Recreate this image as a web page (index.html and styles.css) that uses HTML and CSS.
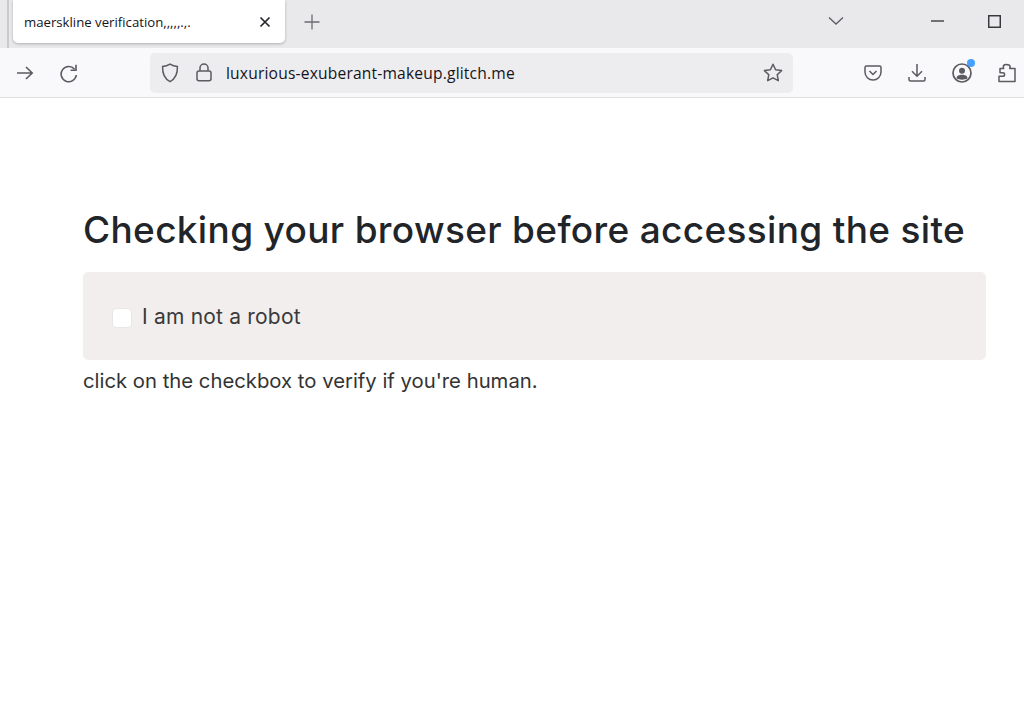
FILE: index.html
```html
<!DOCTYPE html>
<html lang="en">
<head>
<meta charset="utf-8">
<title>maerskline verification</title>
<link rel="stylesheet" href="styles.css">
</head>
<body>
<header class="browser">
  <div class="tabbar">
    <div class="tab-sep"></div>
    <div class="tab">
      <span class="tab-title">maerskline verification,,,,,.,.</span>
      <svg class="tab-close" width="12" height="12" viewBox="0 0 12 12"><path d="M1.500 1.500l9 9M10.500 1.500l-9 9" stroke="#26262b" stroke-width="1.700" fill="none"/></svg>
    </div>
    <svg class="newtab" width="16" height="16" viewBox="0 0 16 16"><path d="M8 .5v15M.5 8h15" stroke="#6b6b70" stroke-width="1.300" fill="none"/></svg>
    <div class="tabbar-right">
      <svg class="tabs-list" width="16" height="10" viewBox="0 0 16 10"><path d="M1 1.500l7 6.500 7-6.500" stroke="#5b5b60" stroke-width="1.300" fill="none"/></svg>
      <svg class="win-min" width="14" height="2" viewBox="0 0 14 2"><path d="M0 1h13" stroke="#303034" stroke-width="1.300"/></svg>
      <svg class="win-max" width="13" height="13" viewBox="0 0 13 13"><rect x=".75" y=".75" width="11.500" height="11.500" stroke="#303034" stroke-width="1.400" fill="none"/></svg>
    </div>
  </div>
  <div class="toolbar">
    <svg class="tool-fwd" width="18" height="16" viewBox="0 0 18 16"><path d="M1 8h15M10 2l6.200 6-6.200 6" stroke="#5b5b60" stroke-width="1.600" fill="none"/></svg>
    <svg class="tool-reload" width="20" height="20" viewBox="0 0 20 20"><path d="M15.600 6.200A7.600 7.600 0 1 0 17.300 12" stroke="#5b5b60" stroke-width="1.600" fill="none"/><path d="M17 1.800v5.400h-5.400" stroke="#5b5b60" stroke-width="1.600" fill="none"/></svg>
    <div class="urlbar">
      <svg class="url-shield" width="18" height="20" viewBox="0 0 18 20"><path d="M9 1.200c2.300 1.400 4.700 2.100 7.400 2.300.3 6.800-1.500 12-7.400 15.100C3.100 15.500 1.300 10.300 1.600 3.500 4.300 3.300 6.700 2.600 9 1.200z" stroke="#5b5b60" stroke-width="1.500" fill="none"/></svg>
      <svg class="url-lock" width="16" height="19" viewBox="0 0 16 19"><path d="M4 8V5a4 4 0 0 1 8 0v3" stroke="#5b5b60" stroke-width="1.500" fill="none"/><rect x="1" y="8" width="14" height="9.800" rx="2" stroke="#5b5b60" stroke-width="1.500" fill="none"/></svg>
      <span class="url-text">luxurious-exuberant-makeup.glitch.me</span>
      <svg class="url-star" width="20" height="19" viewBox="0 0 20 19"><path d="M10 1.300l2.600 5.500 6 .8-4.400 4.100 1.100 6L10 14.800l-5.300 2.900 1.100-6L1.400 7.600l6-.8z" stroke="#5b5b60" stroke-width="1.500" fill="none" stroke-linejoin="round"/></svg>
    </div>
    <div class="tool-right">
      <svg width="18" height="16" viewBox="0 0 18 16"><path d="M2.500 1h13A1.500 1.500 0 0 1 17 2.500V7a8 8 0 0 1-16 0V2.500A1.500 1.500 0 0 1 2.500 1z" stroke="#5b5b60" stroke-width="1.500" fill="none"/><path d="M5.500 6L9 9.500 12.500 6" stroke="#5b5b60" stroke-width="1.500" fill="none"/></svg>
      <svg width="18" height="19" viewBox="0 0 18 19"><path d="M9 1v12M4 8.300l5 5 5-5M1 14v2.500A1.500 1.500 0 0 0 2.500 18h13a1.500 1.500 0 0 0 1.500-1.500V14" stroke="#5b5b60" stroke-width="1.500" fill="none"/></svg>
      <span class="account">
        <svg width="20" height="20" viewBox="0 0 20 20"><circle cx="10" cy="10" r="9" stroke="#5b5b60" stroke-width="1.700" fill="none"/><circle cx="10" cy="7.800" r="3" fill="#5b5b60"/><path d="M4.500 15.500c0-3 2.500-3.800 5.500-3.800s5.500.8 5.500 3.800c-3 1.500-8 1.500-11 0z" fill="#5b5b60"/></svg>
        <span class="account-dot"></span>
      </span>
      <svg width="18" height="20" viewBox="0 0 18 20"><path d="M8 1.500c-1.700 0-2.700 1.100-2.700 2.500 0 .6.200 1 .4 1.500H2v4.200h2.800c1.100 0 1.800.7 1.800 1.700s-.7 1.800-1.800 1.800H1v5.300h16V5.500h-5.300c.3-.5.500-1 .5-1.500 0-1.400-1.500-2.500-4.200-2.500z" stroke="#5b5b60" stroke-width="1.500" fill="none" stroke-linejoin="round"/></svg>
    </div>
  </div>
</header>
<main class="page">
  <h1 class="title">Checking your browser before accessing the site</h1>
  <div class="check-card">
    <span class="check-box"></span>
    <span class="check-label">I am not a robot</span>
  </div>
  <p class="hint">click on the checkbox to verify if you're human.</p>
</main>
</body>
</html>
```
FILE: styles.css
```css
* { box-sizing: border-box; }
html, body { margin: 0; padding: 0; height: 100%; overflow: hidden; background: #fff; }
body { font-family: "Inter", "Liberation Sans", sans-serif; color: #212529; }
svg { display: block; flex: none; }

.browser { display: flex; flex-direction: column; }
.tabbar { height: 48px; background: #e9e9ec; display: flex; align-items: flex-start; }
.tab-sep { width: 2px; height: 48px; margin-left: 7px; background: #c9c9ce; }
.tab { width: 272px; height: 43px; margin-left: 4px; padding: 0 14px 0 11px; background: #fff; border-radius: 0 0 5px 5px; box-shadow: 0 1px 3px rgba(0,0,0,.25); display: flex; align-items: center; justify-content: space-between; }
.tab-title { font-family: "Open Sans", sans-serif; font-size: 13.2px; color: #15141a; letter-spacing: 0; }
.newtab { margin: 14px 0 0 19px; }
.tabbar-right { margin-left: auto; display: flex; align-items: center; height: 42px; padding-right: 23px; }
.tabs-list { margin-right: 87px; }
.win-min { margin-right: 43px; }

.toolbar { height: 50px; background: #f9f9fb; border-bottom: 1px solid #e0e0e2; display: flex; align-items: center; padding: 0 8px 0 16px; }
.tool-reload { margin-left: 25px; }
.urlbar { width: 643px; height: 40px; margin-left: 71px; background: #ededf0; border-radius: 5px; display: flex; align-items: center; padding: 0 10px 0 11px; }
.url-lock { margin-left: 17px; }
.url-text { margin-left: 14px; font-family: "Open Sans", sans-serif; font-size: 15.6px; color: #15141a; letter-spacing: .18px; }
.url-star { margin-left: auto; }
.tool-right { margin-left: auto; display: flex; align-items: center; gap: 26px; }
.account { position: relative; display: block; }
.account-dot { position: absolute; top: -4px; right: -3px; width: 8px; height: 8px; border-radius: 50%; background: #45a1ff; }

.page { padding: 105px 38px 0 83px; }
.title { margin: 0; font-size: 37px; line-height: 54px; font-weight: 500; color: #212529; letter-spacing: .34px; white-space: nowrap; }
.check-card { margin-top: 15px; height: 88px; background: #f2eeee; border-radius: 5px; display: flex; align-items: center; padding: 0 0 0 29px; gap: 10px; }
.check-box { width: 20px; height: 20px; background: #fff; border: 1px solid #e9e6e6; border-radius: 4px; margin-top: 3px; }
.check-label { font-size: 21px; line-height: 24px; color: #3a3a3a; letter-spacing: .2px; margin-top: 2px; }
.hint { margin: 7px 0 0; font-size: 20.3px; line-height: 28px; color: #333; white-space: nowrap; }
```
